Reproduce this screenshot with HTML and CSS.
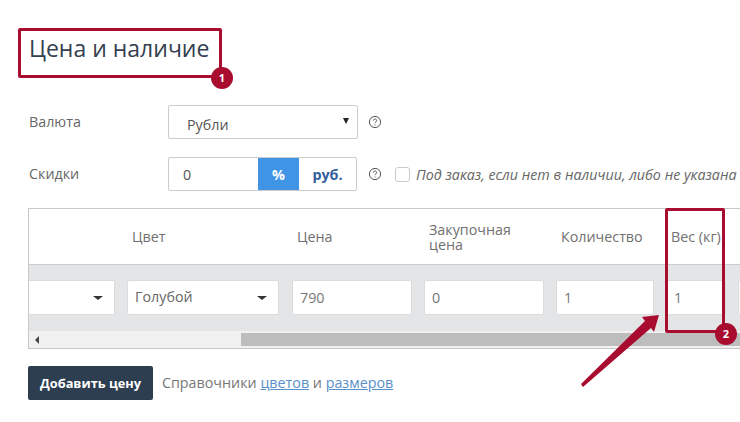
FILE: index.html
```html
<!DOCTYPE html>
<html lang="ru">
<head>
<meta charset="utf-8">
<title>Цена и наличие</title>
<link rel="stylesheet" href="styles.css">
</head>
<body>
<main class="page">
  <h1 class="title">Цена и наличие</h1>
  <div class="form-row row-currency">
    <span class="label">Валюта</span>
    <div class="select-box"><span>Рубли</span><i class="caret-small"></i></div>
    <svg class="help" viewBox="0 0 14 14"><circle cx="7" cy="7" r="5.6"/><path d="M5.4 5.6a1.6 1.6 0 1 1 2.5 1.3c-.6.4-.9.7-.9 1.3"/><path d="M7 9.6v.9"/></svg>
  </div>
  <div class="form-row row-discount">
    <span class="label">Скидки</span>
    <div class="discount">
      <span class="discount-value">0</span>
      <span class="discount-pct">%</span>
      <span class="discount-rub">руб.</span>
    </div>
    <svg class="help" viewBox="0 0 14 14"><circle cx="7" cy="7" r="5.6"/><path d="M5.4 5.6a1.6 1.6 0 1 1 2.5 1.3c-.6.4-.9.7-.9 1.3"/><path d="M7 9.6v.9"/></svg>
    <span class="check"></span>
    <em class="check-label">Под заказ, если нет в наличии, либо не указана</em>
  </div>
  <section class="table">
    <div class="thead">
      <div class="th c-size"></div>
      <div class="th c-color">Цвет</div>
      <div class="th c-price">Цена</div>
      <div class="th c-cost">Закупочная цена</div>
      <div class="th c-qty">Количество</div>
      <div class="th c-weight">Вес (кг)</div>
    </div>
    <div class="tbody">
      <div class="cell c-size"><i class="caret"></i></div>
      <div class="cell c-color color-cell"><span>Голубой</span><i class="caret"></i></div>
      <div class="cell c-price">790</div>
      <div class="cell c-cost">0</div>
      <div class="cell c-qty">1</div>
      <div class="cell c-weight">1</div>
      <div class="cell c-next"></div>
    </div>
    <div class="scrollbar">
      <i class="scroll-left"></i>
      <div class="scroll-thumb"></div>
    </div>
  </section>
  <div class="actions">
    <button class="add">Добавить цену</button>
    <span class="refs">Справочники <a href="#">цветов</a> и <a href="#">размеров</a></span>
  </div>
</main>
<div class="mark mark-1"></div>
<div class="badge badge-1">1</div>
<div class="mark mark-2"></div>
<div class="badge badge-2">2</div>
<svg class="arrow" viewBox="0 0 82 76"><path d="M1 72 L65 9 L62 5 L79 3 L74 20 L71 16 L3 75 Z"/></svg>
</body>
</html>
```

FILE: styles.css
```css
* { box-sizing: border-box; }
html, body { margin: 0; height: 100%; overflow: hidden; background: #fff; }
body { font-family: "Open Sans", "Noto Sans", sans-serif; color: #666; font-size: 14.3px; position: relative; }
.page { padding: 34px 0 0 28px; width: 740px; }
.title { margin: 0 0 0 1px; font-size: 23px; font-weight: 400; line-height: 29px; color: #34404f; }
.form-row { display: flex; align-items: center; white-space: nowrap; }
.row-currency { margin-top: 42px; height: 34px; }
.row-discount { margin-top: 18px; height: 34px; }
.label { width: 140px; padding-left: 1px; color: #666; position: relative; top: -1px; }
.select-box { width: 190px; height: 34px; border: 1px solid #ccc; border-radius: 2px; display: flex; align-items: center; justify-content: space-between; padding: 4px 8px 0 18px; color: #555; }
.caret-small { width: 0; height: 0; border-left: 3.5px solid transparent; border-right: 3.5px solid transparent; border-top: 6px solid #222; margin-top: -7px; }
.help { width: 14px; height: 14px; margin-left: 10px; fill: none; stroke: #555; stroke-width: 1; }
.discount { width: 189px; height: 34px; border: 1px solid #ccc; border-radius: 2px; display: flex; align-items: center; }
.discount-value { width: 89px; padding-left: 14px; color: #555; }
.discount-pct { width: 41px; height: 32px; background: #3f94e6; color: #fff; font-weight: 700; display: flex; align-items: center; justify-content: center; }
.discount-rub { flex: 1; text-align: center; color: #34609c; font-weight: 700; }
.row-discount .help { margin-left: 11px; }
.check { width: 15px; height: 15px; border: 1px solid #ccc; border-radius: 3px; margin-left: 13px; }
.check-label { margin-left: 6px; color: #666; }
.table { margin-top: 17px; width: 740px; height: 141px; border: 1px solid #c8c8c8; border-right: 0; overflow: hidden; }
.thead, .tbody { display: flex; }
.thead { height: 56px; border-bottom: 1px solid #ccc; }
.th { display: flex; align-items: center; line-height: 15px; color: #707070; flex: none; }
.tbody { height: 66px; background: #e4e5e7; align-items: center; gap: 12px; padding-bottom: 1px; }
.cell { flex: none; height: 35px; background: #fff; border: 1px solid #dcdcdc; border-radius: 2px; display: flex; align-items: center; padding-left: 7px; color: #777; }
.thead .c-size { width: 103px; }
.thead .c-color { width: 165px; }
.thead .c-price { width: 132px; }
.thead .c-cost { width: 132px; padding-right: 30px; }
.thead .c-qty { width: 110px; }
.thead .c-weight { width: 60px; }
.tbody .c-size { width: 86px; justify-content: flex-end; padding-right: 11px; border-left: 0; border-radius: 0 2px 2px 0; }
.tbody .c-color { width: 152px; color: #666; justify-content: space-between; padding-right: 11px; }
.tbody .c-price { width: 120px; margin-left: 1px; }
.tbody .c-cost { width: 120px; }
.tbody .c-qty { width: 98px; }
.tbody .c-weight { width: 60px; }
.tbody .c-next { width: 60px; }
.color-cell span { position: relative; top: -1px; }
.caret { width: 0; height: 0; border-left: 5px solid transparent; border-right: 5px solid transparent; border-top: 4px solid #333; }
.scrollbar { height: 17px; background: #f1f1f1; display: flex; align-items: center; position: relative; padding-left: 6px; }
.scroll-left { width: 0; height: 0; border-top: 4px solid transparent; border-bottom: 4px solid transparent; border-right: 4px solid #444; }
.scroll-thumb { position: absolute; left: 212px; top: 2px; right: 0; height: 13px; background: #bdbdbd; }
.actions { display: flex; align-items: center; margin-top: 17px; }
.add { width: 125px; height: 34px; border: 0; border-radius: 2px; background: #2d3e50; color: #fff; font: 700 12.8px "Open Sans", sans-serif; padding: 0; }
.refs { margin-left: 9px; color: #777; position: relative; top: -1px; }
.refs a { color: #5b8fc9; }
.mark { position: absolute; border: 3px solid #a80c2f; border-radius: 2px; }
.mark-1 { left: 18px; top: 28px; width: 204px; height: 50px; }
.mark-2 { left: 665px; top: 208px; width: 60px; height: 125px; }
.badge { position: absolute; width: 22px; height: 22px; border-radius: 50%; background: #a80c2f; color: #fff; font: 700 11px/22px "Open Sans", sans-serif; text-align: center; }
.badge-1 { left: 211px; top: 67px; }
.badge-2 { left: 715px; top: 323px; }
.arrow { position: absolute; left: 580px; top: 312px; width: 82px; height: 76px; fill: #a80c2f; }
```
